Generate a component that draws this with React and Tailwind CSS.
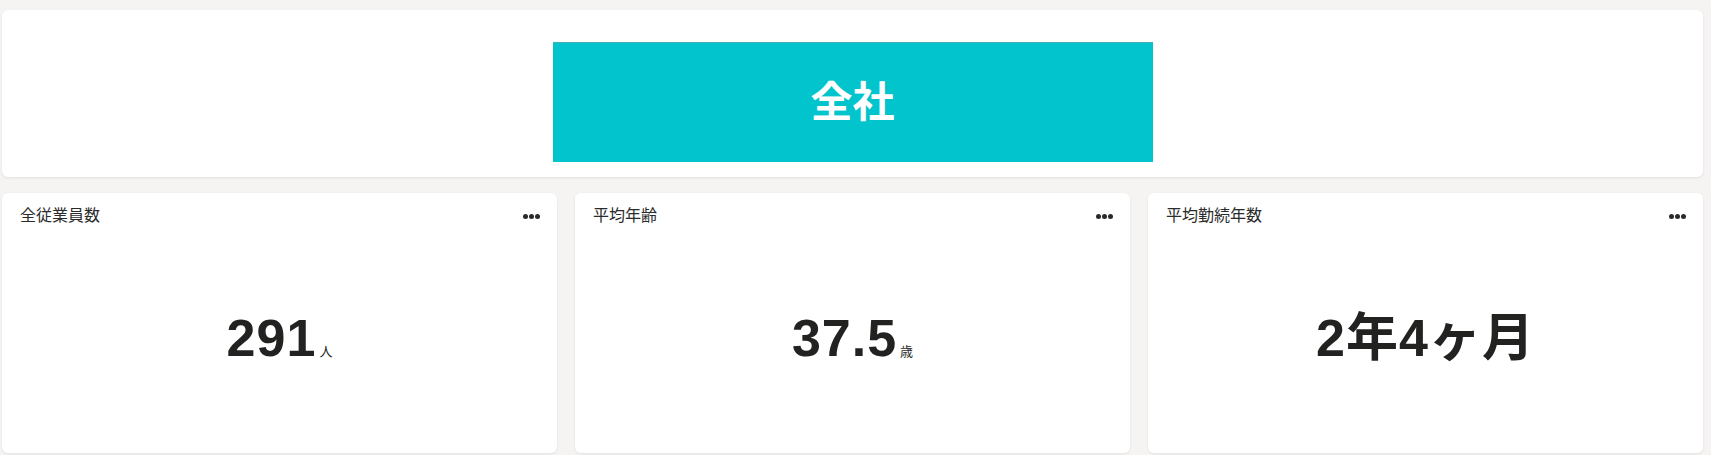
import React from "react";

const stats = [
  { title: "全従業員数", value: "291", unit: "人" },
  { title: "平均年齢", value: "37.5", unit: "歳" },
  { title: "平均勤続年数", value: "2年4ヶ月", unit: "" },
];

const MoreDots = () => (
  <div className="flex items-center gap-[1px]">
    <span className="w-[5px] h-[5px] rounded-full bg-[#2a2a2a]" />
    <span className="w-[5px] h-[5px] rounded-full bg-[#2a2a2a]" />
    <span className="w-[5px] h-[5px] rounded-full bg-[#2a2a2a]" />
  </div>
);

const StatCard = ({ title, value, unit }) => (
  <div className="bg-white rounded-[6px] shadow-[0_1px_3px_rgba(0,0,0,0.08)] h-[260px] flex flex-col">
    <div className="flex items-center justify-between pl-[18px] pr-[17px] pt-[4px] h-[42px]">
      <span className="text-[16px] text-[#2b2b2b] leading-none">{title}</span>
      <MoreDots />
    </div>
    <div className="flex-1 flex items-center justify-center pb-[12px]">
      <div className="flex items-baseline">
        <span className="text-[52px] font-bold text-[#222220] leading-none tracking-[1px]">
          {value}
        </span>
        {unit && (
          <span className="text-[13px] text-[#2b2b2b] ml-[3px] leading-none">{unit}</span>
        )}
      </div>
    </div>
  </div>
);

const App = () => {
  return (
    <div
      className="min-h-screen bg-[#f5f4f2] pl-[2px] pr-[8px] pt-[10px]"
      style={{ fontFamily: '"Liberation Sans", "Noto Sans CJK JP", sans-serif' }}
    >
      {/* Header card */}
      <div className="bg-white rounded-[6px] shadow-[0_1px_3px_rgba(0,0,0,0.08)] h-[167px] flex justify-center pt-[32px]">
        <div className="w-[600px] h-[120px] bg-[#02c4cd] border-t border-[#3fb0b8] flex items-center justify-center">
          <span className="text-white text-[42px] font-bold leading-none">全社</span>
        </div>
      </div>

      {/* Stats */}
      <div className="grid grid-cols-3 gap-[18px] mt-[16px]">
        {stats.map((s, i) => (
          <StatCard key={i} title={s.title} value={s.value} unit={s.unit} />
        ))}
      </div>
    </div>
  );
};

export default App;
